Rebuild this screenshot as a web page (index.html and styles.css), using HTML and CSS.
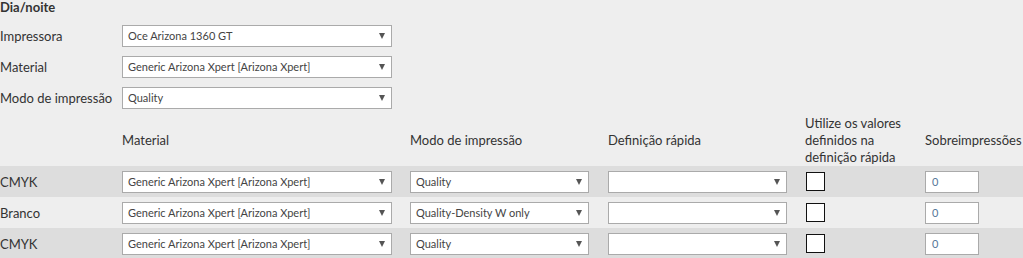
FILE: index.html
```
<!DOCTYPE html>
<html>
	<head>
		<meta charset="utf-8">
		<link rel="stylesheet" href="styles.css">
	</head>
	<body>
		<div class="secTitle">Dia/noite</div>
		<div class="frm">
			<div class="frmRow">
				<span class="frmLbl">Impressora</span>
				<span class="dd ddWide">Oce Arizona 1360 GT</span>
			</div>
			<div class="frmRow">
				<span class="frmLbl">Material</span>
				<span class="dd ddWide">Generic Arizona Xpert [Arizona Xpert]</span>
			</div>
			<div class="frmRow">
				<span class="frmLbl">Modo de impressão</span>
				<span class="dd ddWide">Quality</span>
			</div>
		</div>
		<table class="tbl" cellspacing="0" cellpadding="0">
			<tr class="hdRow">
				<th class="c1"></th>
				<th class="c2">Material</th>
				<th class="c3">Modo de impressão</th>
				<th class="c4">Definição rápida</th>
				<th class="c5">Utilize os valores definidos na definição rápida</th>
				<th class="c6">Sobreimpressões</th>
			</tr>
			<tr class="trCl ODD">
				<td>CMYK</td>
				<td><span class="dd ddWide">Generic Arizona Xpert [Arizona Xpert]</span></td>
				<td><span class="dd ddMid">Quality</span></td>
				<td><span class="dd ddMid"></span></td>
				<td><span class="chk"></span></td>
				<td><span class="num">0</span></td>
			</tr>
			<tr class="trCl">
				<td>Branco</td>
				<td><span class="dd ddWide">Generic Arizona Xpert [Arizona Xpert]</span></td>
				<td><span class="dd ddMid">Quality-Density W only</span></td>
				<td><span class="dd ddMid"></span></td>
				<td><span class="chk"></span></td>
				<td><span class="num">0</span></td>
			</tr>
			<tr class="trCl ODD">
				<td>CMYK</td>
				<td><span class="dd ddWide">Generic Arizona Xpert [Arizona Xpert]</span></td>
				<td><span class="dd ddMid">Quality</span></td>
				<td><span class="dd ddMid"></span></td>
				<td><span class="chk"></span></td>
				<td><span class="num">0</span></td>
			</tr>
		</table>
	</body>
</html>
```

FILE: styles.css
```
body {
	margin: 0;
	background-color: #eeeeee;
	font-family: Lato, "Open Sans", sans-serif;
	font-size: 13px;
	color: #333333;
	overflow: hidden;
}

.secTitle {
	font-weight: bold;
	height: 25px;
	line-height: 14px;
}

.frm {
	display: flex;
	flex-direction: column;
	gap: 9px;
}

.frmRow {
	display: flex;
	align-items: center;
	height: 22px;
}

.frmLbl {
	width: 122px;
}

.dd {
	position: relative;
	display: block;
	box-sizing: border-box;
	height: 22px;
	line-height: 20px;
	padding-left: 5px;
	border: 1px solid #aaaaaa;
	background-color: #ffffff;
	font-size: 11px;
	color: #444444;
	white-space: nowrap;
}

.dd::after {
	content: "";
	position: absolute;
	right: 6px;
	top: 7px;
	border-left: 3px solid transparent;
	border-right: 3px solid transparent;
	border-top: 6px solid #555555;
}

.ddWide {
	width: 270px;
}

.ddMid {
	width: 179px;
}

.tbl {
	margin-top: 1px;
	border-collapse: collapse;
	table-layout: fixed;
	width: 1040px;
}

.tbl th {
	height: 50px;
	padding: 5px 0 0 0;
	text-align: left;
	font-weight: normal;
	line-height: 17px;
	vertical-align: middle;
}

.c1 { width: 122px; }
.c2 { width: 288px; }
.c3 { width: 198px; }
.c4 { width: 197px; }
.c5 { width: 120px; }
.c6 { width: 115px; }

.trCl td {
	height: 31px;
	padding: 0;
	vertical-align: middle;
}

.ODD {
	background-color: #dddddd;
}

.chk {
	display: block;
	box-sizing: border-box;
	width: 19px;
	height: 19px;
	margin-left: 1px;
	border: 1px solid #111111;
	background-color: #ffffff;
}

.num {
	display: block;
	box-sizing: border-box;
	width: 54px;
	height: 22px;
	line-height: 20px;
	padding-left: 6px;
	border: 1px solid #aaaaaa;
	background-color: #ffffff;
	font-size: 11px;
	color: #557799;
}
```
